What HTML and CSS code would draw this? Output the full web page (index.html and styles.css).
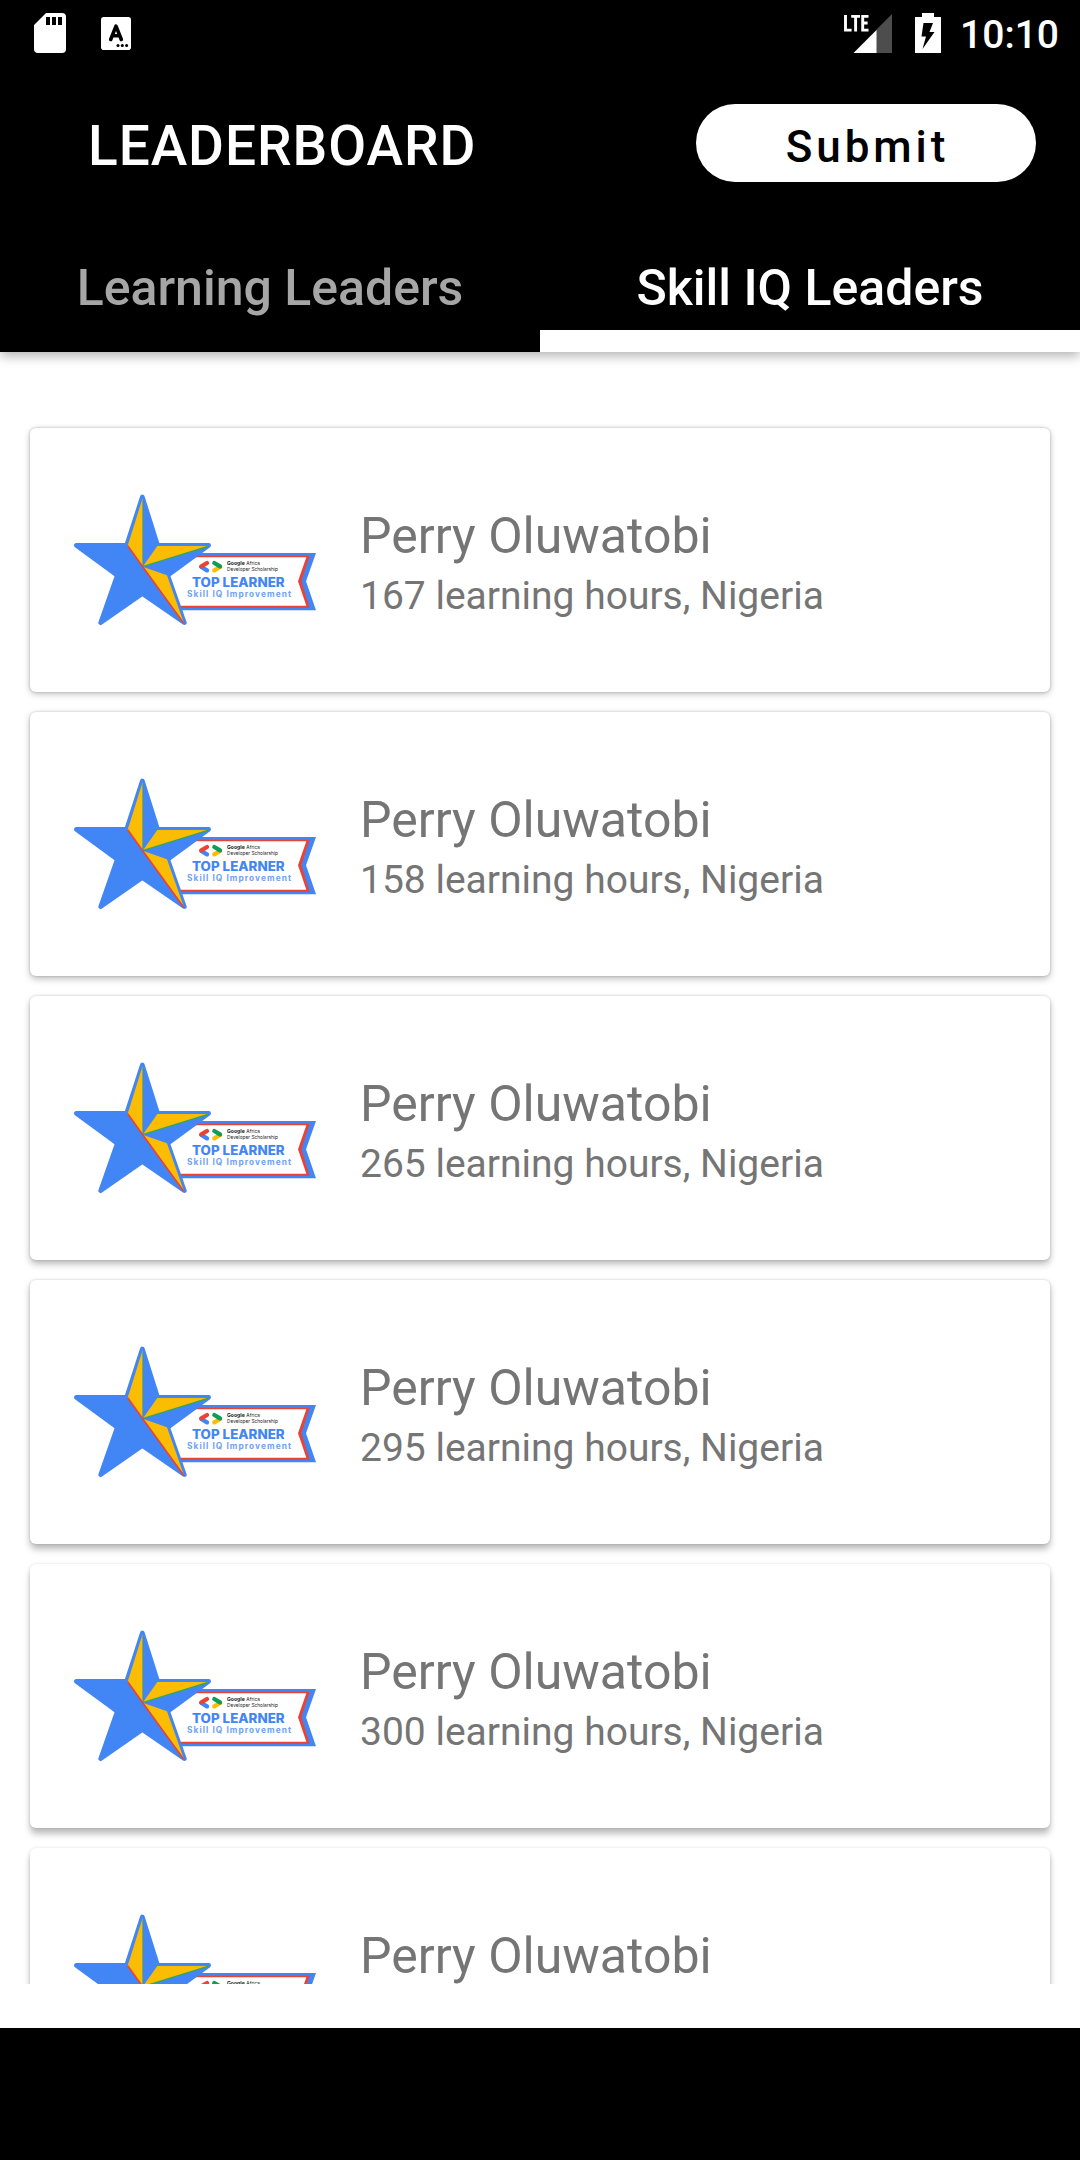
FILE: index.html
```html
<!DOCTYPE html>
<html lang="en">
<head>
<meta charset="utf-8">
<title>Leaderboard</title>
<link rel="stylesheet" href="styles.css">
</head>
<body>
<svg class="defs" width="0" height="0" aria-hidden="true">
  <defs>
  <g id="star">
    <path fill="#4285f4" d="M330 219H768L738 304L768 391H330Z"/>
    <path fill="#ea4335" d="M330 227H749L724 304L749 383H330Z"/>
    <path fill="#fff" d="M330 232H739L714 304L739 377H330Z"/>
    <path fill="#4285f4" stroke="#4285f4" stroke-width="14" stroke-linejoin="round" d="M247 51L293 196H446L323 286L373 428L247 341L122 428L172 286L49 196H200Z"/>
    <path fill="#fbbc04" d="M248 54V260L203 197Z"/>
    <path fill="#fbbc04" d="M248 260L292 198H444Z"/>
    <path fill="#fbbc04" d="M248 260L321 286L372 430Z"/>
    <path stroke="#34a853" stroke-width="4" fill="none" d="M248 260L444 199"/>
    <path stroke="#34a853" stroke-width="1.5" fill="none" d="M248 60V260"/>
    <path stroke="#ea4335" stroke-width="5" fill="none" d="M203 197L248 260L371 430"/>
    <g fill="none" stroke-width="13" stroke-linecap="round">
      <path stroke="#4285f4" d="M424 261L441 271"/>
      <path stroke="#ea4335" d="M424 259L441 249"/>
      <path stroke="#fbbc04" d="M463 271L480 261"/>
      <path stroke="#0f9d58" d="M463 249L480 259"/>
    </g>
  </g>
  </defs>
</svg>

<header class="app-bar">
  <div class="status">
    <svg class="icon-sd" viewBox="0 0 32 40"><path fill="#fff" fill-rule="evenodd" d="M12 0H28Q32 0 32 4V36Q32 40 28 40H4Q0 40 0 36V12ZM12 4V12H16V4ZM18 4V12H22V4ZM24 4V12H28V4Z"/></svg>
    <svg class="icon-a" viewBox="0 0 30 33"><rect width="30" height="33" rx="2.8" fill="#fff"/><path fill="none" stroke="#000" stroke-width="3.6" stroke-linecap="round" stroke-linejoin="round" d="M9.7 22.5L15 9.2L20.3 22.5M11.5 18.7H18.5"/><g fill="#000"><circle cx="17" cy="28.6" r="1.5"/><circle cx="21.3" cy="28.6" r="1.5"/><circle cx="25.6" cy="28.6" r="1.5"/></g></svg>
    <span class="grow"></span>
    <svg class="icon-lte" viewBox="0 0 48 39"><path fill="#4d4d4d" d="M48 0V39H32V16Z"/><path fill="#fff" d="M9.5 39L32.5 16V39Z"/><path fill="none" stroke="#fff" stroke-width="2.9" d="M1.5 1V16.1H7.6M7.2 2.4H16M11.6 2.4V17.5M24.5 2.4H18.7V16.1H24.5M18.7 9H23.6"/></svg>
    <svg class="icon-battery" viewBox="0 0 26 40"><path fill="#fff" d="M7 0H19V4H26V40H0V4H7Z"/><path d="M8.5 10H18L14.5 19H19.5L7.5 36L11 23.5H6.5Z"/></svg>
    <span class="clock">10:10</span>
  </div>
  <div class="toolbar">
    <h1 class="title">LEADERBOARD</h1>
    <button class="submit">Submit</button>
  </div>
  <nav class="tabs">
    <a class="tab">Learning Leaders</a>
    <a class="tab tab-active">Skill IQ Leaders</a>
  </nav>
</header>

<main class="list">
  <article class="card">
    <svg class="badge" viewBox="42 42 726 396"><use href="#star"/><text class="badge-org badge-bold" x="501" y="256" textLength="53" lengthAdjust="spacingAndGlyphs">Google</text><text class="badge-org" x="559" y="256" textLength="41" lengthAdjust="spacingAndGlyphs">Africa</text><text class="badge-org" x="501" y="274" textLength="153" lengthAdjust="spacingAndGlyphs">Developer Scholarship</text><text class="badge-title" x="396" y="321" textLength="278" lengthAdjust="spacingAndGlyphs">TOP LEARNER</text><text class="badge-sub" x="381" y="352" textLength="312">Skill IQ Improvement</text></svg>
    <div class="info"><h2 class="name">Perry Oluwatobi</h2><p class="detail">167 learning hours, Nigeria</p></div>
  </article>
  <article class="card">
    <svg class="badge" viewBox="42 42 726 396"><use href="#star"/><text class="badge-org badge-bold" x="501" y="256" textLength="53" lengthAdjust="spacingAndGlyphs">Google</text><text class="badge-org" x="559" y="256" textLength="41" lengthAdjust="spacingAndGlyphs">Africa</text><text class="badge-org" x="501" y="274" textLength="153" lengthAdjust="spacingAndGlyphs">Developer Scholarship</text><text class="badge-title" x="396" y="321" textLength="278" lengthAdjust="spacingAndGlyphs">TOP LEARNER</text><text class="badge-sub" x="381" y="352" textLength="312">Skill IQ Improvement</text></svg>
    <div class="info"><h2 class="name">Perry Oluwatobi</h2><p class="detail">158 learning hours, Nigeria</p></div>
  </article>
  <article class="card">
    <svg class="badge" viewBox="42 42 726 396"><use href="#star"/><text class="badge-org badge-bold" x="501" y="256" textLength="53" lengthAdjust="spacingAndGlyphs">Google</text><text class="badge-org" x="559" y="256" textLength="41" lengthAdjust="spacingAndGlyphs">Africa</text><text class="badge-org" x="501" y="274" textLength="153" lengthAdjust="spacingAndGlyphs">Developer Scholarship</text><text class="badge-title" x="396" y="321" textLength="278" lengthAdjust="spacingAndGlyphs">TOP LEARNER</text><text class="badge-sub" x="381" y="352" textLength="312">Skill IQ Improvement</text></svg>
    <div class="info"><h2 class="name">Perry Oluwatobi</h2><p class="detail">265 learning hours, Nigeria</p></div>
  </article>
  <article class="card">
    <svg class="badge" viewBox="42 42 726 396"><use href="#star"/><text class="badge-org badge-bold" x="501" y="256" textLength="53" lengthAdjust="spacingAndGlyphs">Google</text><text class="badge-org" x="559" y="256" textLength="41" lengthAdjust="spacingAndGlyphs">Africa</text><text class="badge-org" x="501" y="274" textLength="153" lengthAdjust="spacingAndGlyphs">Developer Scholarship</text><text class="badge-title" x="396" y="321" textLength="278" lengthAdjust="spacingAndGlyphs">TOP LEARNER</text><text class="badge-sub" x="381" y="352" textLength="312">Skill IQ Improvement</text></svg>
    <div class="info"><h2 class="name">Perry Oluwatobi</h2><p class="detail">295 learning hours, Nigeria</p></div>
  </article>
  <article class="card">
    <svg class="badge" viewBox="42 42 726 396"><use href="#star"/><text class="badge-org badge-bold" x="501" y="256" textLength="53" lengthAdjust="spacingAndGlyphs">Google</text><text class="badge-org" x="559" y="256" textLength="41" lengthAdjust="spacingAndGlyphs">Africa</text><text class="badge-org" x="501" y="274" textLength="153" lengthAdjust="spacingAndGlyphs">Developer Scholarship</text><text class="badge-title" x="396" y="321" textLength="278" lengthAdjust="spacingAndGlyphs">TOP LEARNER</text><text class="badge-sub" x="381" y="352" textLength="312">Skill IQ Improvement</text></svg>
    <div class="info"><h2 class="name">Perry Oluwatobi</h2><p class="detail">300 learning hours, Nigeria</p></div>
  </article>
  <article class="card">
    <svg class="badge" viewBox="42 42 726 396"><use href="#star"/><text class="badge-org badge-bold" x="501" y="256" textLength="53" lengthAdjust="spacingAndGlyphs">Google</text><text class="badge-org" x="559" y="256" textLength="41" lengthAdjust="spacingAndGlyphs">Africa</text></svg>
    <div class="info"><h2 class="name">Perry Oluwatobi</h2></div>
  </article>
</main>
<footer class="nav-bar"></footer>
</body>
</html>
```

FILE: styles.css
```css
* { box-sizing: border-box; }
body {
  margin: 0;
  width: 1080px;
  height: 2160px;
  display: flex;
  flex-direction: column;
  overflow: hidden;
  background: #fff;
  font-family: Roboto, "Noto Sans", sans-serif;
}
.defs { display: block; flex: none; height: 0; }
h1, h2, p { margin: 0; font-weight: 400; }

.app-bar {
  flex: none;
  height: 352px;
  display: flex;
  flex-direction: column;
  background: #000;
  color: #fff;
  box-shadow: 0 4px 11px rgba(0, 0, 0, .3);
}
.status {
  height: 66px;
  display: flex;
  align-items: flex-start;
  padding: 13px 21px 0 34px;
}
.grow { flex: 1; }
.icon-sd { width: 32px; height: 40px; }
.icon-a { width: 30px; height: 33px; margin: 3.5px 0 0 35px; }
.icon-lte { width: 48px; height: 39px; margin-top: 1px; }
.icon-battery { width: 26px; height: 40px; margin-left: 23px; }
.clock { margin: -1px 0 0 19px; font-size: 39px; line-height: 46px; font-weight: 500; }

.toolbar {
  height: 156px;
  display: flex;
  justify-content: space-between;
  align-items: flex-start;
  padding: 38px 44px 0 88px;
}
.title { margin-top: 10px; font-size: 55px; line-height: 64px; font-weight: 500; letter-spacing: .95px; }
.submit {
  width: 340px;
  height: 78px;
  padding: 8px 0 0 3px;
  border: 0;
  border-radius: 39px;
  background: #fff;
  color: #000;
  font: 500 44px/52px Roboto, sans-serif;
  letter-spacing: 3.9px;
}
.tabs { flex: 1; display: flex; }
.tab {
  flex: 1;
  padding-top: 37px;
  text-align: center;
  font-size: 50px;
  line-height: 58px;
  font-weight: 500;
  color: #a6a6a6;
}
.tab-active { color: #fff; border-bottom: 22px solid #fff; }

.list {
  flex: none;
  height: 1632px;
  display: flex;
  flex-direction: column;
  gap: 20px;
  padding: 76px 30px 0;
  overflow: hidden;
  background: transparent;
}
.card {
  flex: none;
  height: 264px;
  display: flex;
  align-items: center;
  gap: 44px;
  padding-left: 44px;
  border-radius: 6px;
  background: #fff;
  box-shadow: 0 2px 7px rgba(0, 0, 0, .24), 0 0 3px rgba(0, 0, 0, .22);
}
.card:nth-child(2) { box-shadow: 0 3px 7px rgba(0, 0, 0, .25), 0 0 3px rgba(0, 0, 0, .2); }
.card:nth-child(3) { box-shadow: 0 4px 7px rgba(0, 0, 0, .27), 0 0 3px rgba(0, 0, 0, .17); }
.card:nth-child(4) { box-shadow: 0 4.5px 7px rgba(0, 0, 0, .28), 0 0 3px rgba(0, 0, 0, .15); }
.card:nth-child(n+5) { box-shadow: 0 6px 6px rgba(0, 0, 0, .26), 0 0 3px rgba(0, 0, 0, .13); }
.badge { flex: none; width: 242px; height: 132px; overflow: hidden; }
.info { align-self: flex-start; padding-top: 79px; }
.name { font-size: 50px; line-height: 58px; color: #757575; }
.detail { margin-top: 8px; font-size: 39px; line-height: 46px; color: #757575; }

.badge-org { font: 400 15px Inter, sans-serif; fill: #222; }
.badge-bold { font-weight: 700; }
.badge-title { font: 800 38px Inter, sans-serif; fill: #4285f4; }
.badge-sub { font: 700 25px Inter, sans-serif; fill: #6ea1f6; }

.nav-bar { flex: none; height: 132px; margin-top: 44px; background: #000; }
```
